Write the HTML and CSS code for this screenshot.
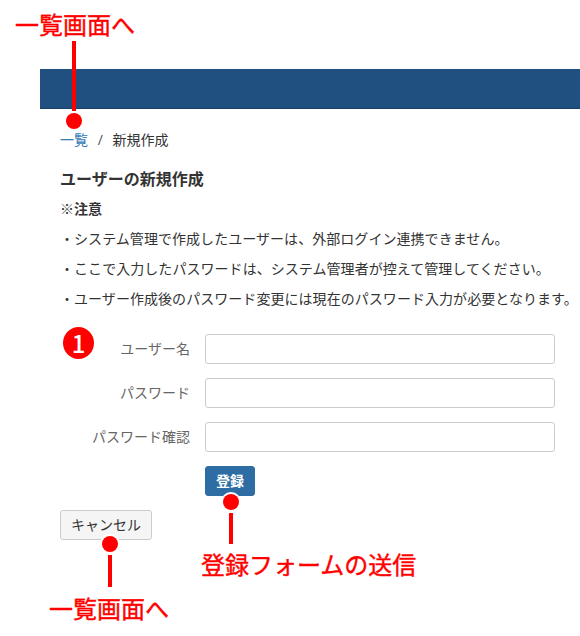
FILE: index.html
```html
<!DOCTYPE html>
<html lang="ja">
<head>
    <meta charset="UTF-8">
    <meta name="viewport" content="width=device-width, initial-scale=1.0">
    <title>ユーザーの新規作成</title>
    <link rel="stylesheet" href="styles.css">
</head>
<body>

    <div class="page">
        <div class="header"></div>

        <div class="content">
            <!-- パンくず -->
            <div class="breadcrumb">
                <a href="#">一覧</a>
                <span class="sep">/</span>
                <span>新規作成</span>
            </div>

            <h1 class="title">ユーザーの新規作成</h1>

            <div class="notes">
                <p class="note-head">※注意</p>
                <p>・システム管理で作成したユーザーは、外部ログイン連携できません。</p>
                <p>・ここで入力したパスワードは、システム管理者が控えて管理してください。</p>
                <p>・ユーザー作成後のパスワード変更には現在のパスワード入力が必要となります。</p>
            </div>

            <!-- 登録フォーム -->
            <form class="form">
                <div class="form-row">
                    <label>ユーザー名</label>
                    <input type="text">
                </div>
                <div class="form-row">
                    <label>パスワード</label>
                    <input type="password">
                </div>
                <div class="form-row">
                    <label>パスワード確認</label>
                    <input type="password">
                </div>
                <div class="form-row">
                    <span class="label-space"></span>
                    <button type="button" class="btn-submit">登録</button>
                </div>
            </form>

            <button type="button" class="btn-cancel">キャンセル</button>
        </div>
    </div>

    <!-- 注釈 -->
    <div class="callout callout-list-top">一覧画面へ</div>
    <div class="line line-top"></div>
    <div class="dot dot-top"></div>

    <div class="step-badge">1</div>

    <div class="dot dot-submit"></div>
    <div class="line line-submit"></div>
    <div class="callout callout-submit">登録フォームの送信</div>

    <div class="dot dot-cancel"></div>
    <div class="line line-cancel"></div>
    <div class="callout callout-list-bottom">一覧画面へ</div>

</body>
</html>
```

FILE: styles.css
```css
html, body {
    margin: 0;
    padding: 0;
    background-color: #fff;
    color: #333;
    font-family: "Open Sans", "Noto Sans CJK JP", sans-serif;
    font-size: 14px;
}

.page {
    padding: 69px 0 0 40px;
    height: 567px;
    overflow: hidden;
}

.header {
    height: 39px;
    background-color: #20507f;
    border-bottom: 1px solid #1a3f63;
}

.content {
    padding: 20px 0 0 20px;
}

.breadcrumb {
    height: 22px;
    line-height: 22px;
    font-size: 14px;
}

.breadcrumb a {
    color: #337ab7;
    text-decoration: none;
}

.breadcrumb .sep {
    margin: 0 6px;
    color: #555;
}

.title {
    margin: 17px 0 0;
    font-size: 16px;
    line-height: 22px;
    font-weight: bold;
}

.notes {
    margin-top: 9px;
}

.notes p {
    margin: 0 0 10px;
    line-height: 20px;
    white-space: nowrap;
    letter-spacing: 0.05px;
}

.notes .note-head {
    font-weight: bold;
}

.form {
    margin-top: 25px;
}

.form-row {
    display: flex;
    align-items: center;
    margin-bottom: 14px;
}

.form-row label,
.label-space {
    width: 145px;
    padding: 0 15px 3px 0;
    box-sizing: border-box;
    text-align: right;
    color: #666;
}

.form-row input {
    width: 350px;
    height: 30px;
    box-sizing: border-box;
    border: 1px solid #ccc;
    border-radius: 3px;
    background-color: #fff;
}

button {
    font-family: inherit;
    font-size: 14px;
    height: 30px;
    padding: 0 0 2px;
    border-radius: 3px;
    box-sizing: border-box;
}

.btn-submit {
    width: 50px;
    border: 1px solid #2e6da4;
    background-color: #2e6da4;
    color: #fff;
    font-weight: bold;
}

.btn-cancel {
    display: block;
    width: 92px;
    border: 1px solid #ccc;
    background-color: #f5f5f5;
    color: #333;
}

/* 注釈 */
.callout {
    position: absolute;
    color: #f00;
    font-family: "Noto Sans CJK JP", sans-serif;
    font-size: 24px;
    line-height: 30px;
    white-space: nowrap;
    -webkit-text-stroke: 0.4px #f00;
}

.callout-list-top { left: 15px; top: 9px; }
.callout-submit { left: 201px; top: 549px; }
.callout-list-bottom { left: 49px; top: 593px; }

.line {
    position: absolute;
    width: 4px;
    background-color: #f00;
}

.line-top { left: 72px; top: 41px; height: 70px; }
.line-submit { left: 229px; top: 513px; height: 31px; }
.line-cancel { left: 108px; top: 555px; height: 32px; }

.dot {
    position: absolute;
    width: 16px;
    height: 16px;
    border-radius: 50%;
    background-color: #f00;
    box-shadow: 0 0 0 2px #fff;
}

.dot-top { left: 66px; top: 113px; box-shadow: none; }
.dot-submit { left: 223px; top: 494px; }
.dot-cancel { left: 102px; top: 536px; }

.step-badge {
    position: absolute;
    left: 63px;
    top: 327px;
    width: 31px;
    height: 32px;
    border-radius: 50%;
    background-color: #f00;
    color: #fff;
    font-family: "Noto Sans CJK JP", sans-serif;
    font-size: 24px;
    font-weight: 500;
    line-height: 32px;
    text-align: center;
}
```
